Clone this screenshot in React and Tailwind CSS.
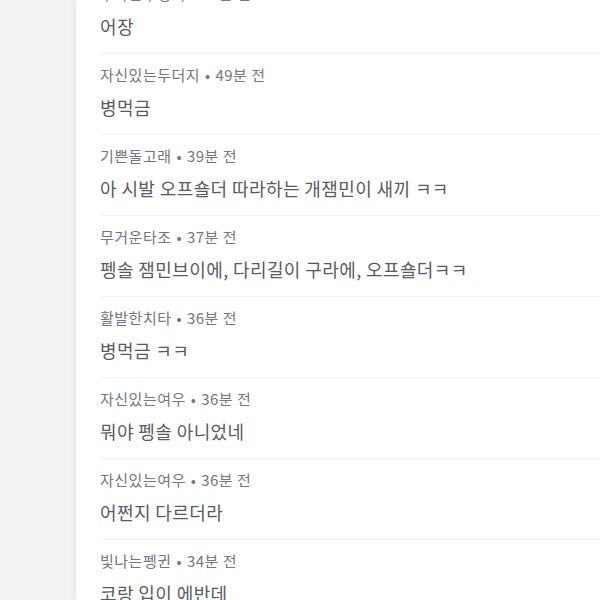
const comments = [
  { nick: "우아한부엉이", time: "50분 전", text: "어장" },
  { nick: "자신있는두더지", time: "49분 전", text: "병먹금" },
  { nick: "기쁜돌고래", time: "39분 전", text: "아 시발 오프숄더 따라하는 개잼민이 새끼 ㅋㅋ" },
  { nick: "무거운타조", time: "37분 전", text: "펭솔 잼민브이에, 다리길이 구라에, 오프숄더ㅋㅋ" },
  { nick: "활발한치타", time: "36분 전", text: "병먹금 ㅋㅋ" },
  { nick: "자신있는여우", time: "36분 전", text: "뭐야 펭솔 아니었네" },
  { nick: "자신있는여우", time: "36분 전", text: "어쩐지 다르더라" },
  { nick: "빛나는펭귄", time: "34분 전", text: "코랑 입이 에반데" },
];

function CommentRow({ nick, time, text }) {
  return (
    <li className="border-b border-[#f3f3f4] pt-[10px] pb-[14px]">
      <p className="text-[15px] leading-[22px] tracking-[0.5px] text-[#72767d]">
        {nick} <span className="mx-[1px]">•</span> {time}
      </p>
      <p className="mt-2 text-[18px] leading-[26px] tracking-[0.4px] text-[#565b63]">
        {text}
      </p>
    </li>
  );
}

export default function App() {
  return (
    <div
      className="flex h-[600px] overflow-hidden bg-[#f3f3f3]"
      style={{ fontFamily: '"Noto Sans CJK KR", "Noto Sans", sans-serif' }}
    >
      <div className="w-[76px] shrink-0" />
      <div className="flex-1 bg-white pl-6 shadow-[-2px_0_6px_rgba(0,0,0,0.05)]">
        <ul className="-mt-[27px]">
          {comments.map((c, i) => (
            <CommentRow key={i} {...c} />
          ))}
        </ul>
      </div>
    </div>
  );
}
